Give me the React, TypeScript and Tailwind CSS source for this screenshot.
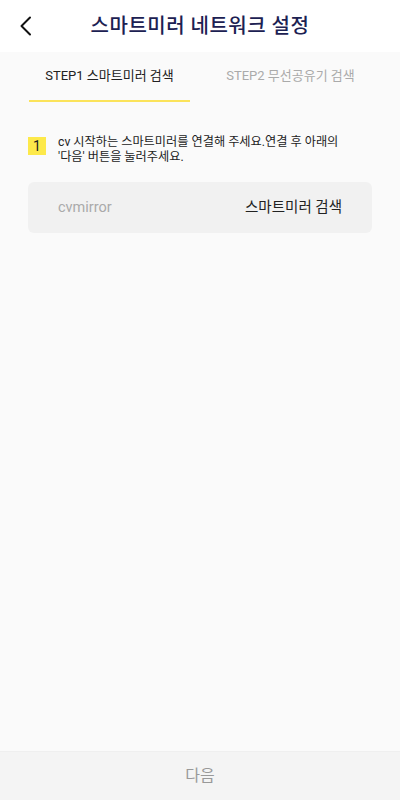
import React from 'react';

const font = { fontFamily: 'Roboto, "Noto Sans CJK KR", "Noto Sans", sans-serif' };

const App: React.FC = () => {
  return (
    <div style={font} className="w-[400px] h-[800px] flex flex-col bg-[#fafafa] text-[#222]">
      {/* Header */}
      <div className="h-[52px] bg-white flex items-center relative shrink-0">
        <button className="absolute left-[17px] top-[15px] w-[18px] h-[22px] flex items-center justify-center">
          <svg width="14" height="20" viewBox="0 0 14 20" fill="none">
            <path d="M11 1.5 L2.5 10 L11 18.5" stroke="#111" strokeWidth="2" strokeLinecap="round" strokeLinejoin="round" />
          </svg>
        </button>
        <h1 className="w-full text-center text-[20px] font-medium text-[#1c2152] tracking-[0.5px] leading-none">스마트미러 네트워크 설정</h1>
      </div>

      {/* Tabs */}
      <div className="flex px-[29px] gap-[20px] h-[50px] shrink-0">
        <div className="w-[161px] flex flex-col">
          <div className="flex-1 flex items-center justify-center text-[13px] text-[#222]">STEP1 스마트미러 검색</div>
          <div className="h-[2px] bg-[#fbe35a]" />
        </div>
        <div className="w-[161px] flex flex-col">
          <div className="flex-1 flex items-center justify-center text-[13px] text-[#aaa]">STEP2 무선공유기 검색</div>
          <div className="h-[2px]" />
        </div>
      </div>

      {/* Content */}
      <div className="flex-1 px-[28px] pt-[33px]">
        <div className="flex items-start gap-[12px]">
          <div className="w-[18px] h-[18px] mt-[2px] bg-[#fde94a] flex items-center justify-center text-[14px] text-[#222] shrink-0">1</div>
          <p className="text-[12.2px] leading-[15px] text-[#222]">
            cv 시작하는 스마트미러를 연결해 주세요.연결 후 아래의<br />'다음' 버튼을 눌러주세요.
          </p>
        </div>

        <div className="mt-[17px] h-[51px] rounded-[6px] bg-[#f1f1f1] flex items-center justify-between pl-[30px] pr-[30px]">
          <span className="text-[14.5px] text-[#aaa]">cvmirror</span>
          <span className="text-[14.5px] text-[#222]">스마트미러 검색</span>
        </div>
      </div>

      {/* Bottom button */}
      <div className="h-[49px] bg-[#f4f4f4] border-t border-[#efefef] flex items-center justify-center shrink-0">
        <span className="text-[16px] text-[#999]">다음</span>
      </div>
    </div>
  );
};

export default App;
